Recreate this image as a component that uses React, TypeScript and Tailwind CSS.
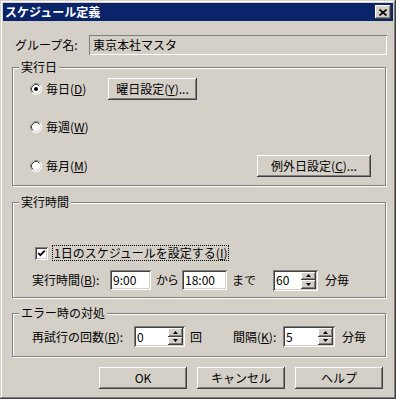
import type { ReactNode } from 'react';

const raised =
  'bg-[#d4d0c8] shadow-[inset_-1px_-1px_0_#404040,inset_1px_1px_0_#ffffff,inset_-2px_-2px_0_#808080,inset_2px_2px_0_#d4d0c8]';
const sunken =
  'shadow-[inset_1px_1px_0_#808080,inset_-1px_-1px_0_#ffffff,inset_2px_2px_0_#404040,inset_-2px_-2px_0_#d4d0c8]';

function Button({ children, className = '' }: { children: ReactNode; className?: string }) {
  return (
    <div className={`flex h-[22px] items-center justify-center ${raised} ${className}`}>
      <span className="leading-[14px]">{children}</span>
    </div>
  );
}

function Group({
  label,
  className = '',
  bodyClassName = '',
  children,
}: {
  label: string;
  className?: string;
  bodyClassName?: string;
  children: ReactNode;
}) {
  return (
    <fieldset
      className={`mr-[1px] border border-[#808080] shadow-[inset_1px_1px_0_#ffffff,1px_1px_0_#ffffff] ${className}`}
    >
      <legend className="ml-[6px] bg-[#d4d0c8] px-[2px] leading-[14px]">{label}</legend>
      <div className={bodyClassName}>{children}</div>
    </fieldset>
  );
}

function Radio({ checked, children }: { checked?: boolean; children: ReactNode }) {
  return (
    <div className="flex items-center gap-[4px]">
      <svg width="12" height="12" viewBox="0 0 12 12" className="shrink-0">
        <circle cx="6" cy="6" r="5.5" fill="#ffffff" stroke="#ffffff" />
        <path d="M2.11 9.89 A5.5 5.5 0 0 1 9.89 2.11" stroke="#808080" fill="none" />
        <circle cx="6" cy="6" r="4.5" fill="none" stroke="#d4d0c8" />
        <path d="M2.82 9.18 A4.5 4.5 0 0 1 9.18 2.82" stroke="#404040" fill="none" />
        <circle cx="6" cy="6" r="3.5" fill="#ffffff" />
        {checked && <circle cx="6" cy="6" r="2" fill="#000000" />}
      </svg>
      <span className="leading-[14px]">{children}</span>
    </div>
  );
}

function Checkbox() {
  return (
    <div className={`flex h-[13px] w-[13px] shrink-0 items-center justify-center bg-white ${sunken}`}>
      <svg width="9" height="9" viewBox="0 0 9 9">
        <polyline points="1.2,4 3.3,6.2 7.8,1.6" fill="none" stroke="#000000" strokeWidth="1.8" />
      </svg>
    </div>
  );
}

function Field({ value, className = '' }: { value: string; className?: string }) {
  return (
    <div className={`flex h-[20px] items-center bg-white pl-[3px] ${sunken} ${className}`}>
      <span className="leading-[14px]">{value}</span>
    </div>
  );
}

function Arrow({ up }: { up?: boolean }) {
  return (
    <div className={`flex flex-1 items-center justify-center ${raised}`}>
      <svg width="5" height="3" viewBox="0 0 5 3">
        <polygon points={up ? '0,3 5,3 2.5,0' : '0,0 5,0 2.5,3'} fill="#000000" />
      </svg>
    </div>
  );
}

function Spin({ value, editW }: { value: string; editW: string }) {
  return (
    <div className={`flex h-[21px] bg-white p-[2px] ${sunken}`}>
      <div className={`flex items-center pl-[1px] ${editW}`}>
        <span className="leading-[14px]">{value}</span>
      </div>
      <div className="flex w-[15px] flex-col">
        <Arrow up />
        <Arrow />
      </div>
    </div>
  );
}

export default function App() {
  return (
    <div
      className="flex h-[399px] w-[396px] flex-col bg-[#d4d0c8] text-[12px] text-black shadow-[inset_-1px_-1px_0_#404040,inset_1px_1px_0_#d4d0c8,inset_-2px_-2px_0_#808080,inset_2px_2px_0_#ffffff]"
      style={{ fontFamily: '"Noto Sans CJK JP", "Noto Sans", sans-serif' }}
    >
      <div className="mx-[3px] mt-[3px] flex h-[18px] items-center justify-between bg-[#0a246a] pl-[2px] pr-[2px]">
        <span className="text-[12px] font-bold leading-[14px] text-white">スケジュール定義</span>
        <div className={`flex h-[14px] w-[16px] items-center justify-center ${raised}`}>
          <svg width="8" height="7" viewBox="0 0 8 7">
            <path d="M0.5 0.5 L7.5 6.5 M7.5 0.5 L0.5 6.5" stroke="#000000" strokeWidth="1.6" />
          </svg>
        </div>
      </div>

      <div className="flex flex-col pl-[12px] pr-[9px]">
        <div className="mt-[14px] flex h-[20px] items-center">
          <span className="w-[77px] pl-[3px] leading-[14px]">グループ名:</span>
          <div className="flex h-[20px] flex-1 items-center pl-[4px] shadow-[inset_1px_1px_0_#808080,inset_-1px_-1px_0_#ffffff]">
            <span className="leading-[14px]">東京本社マスタ</span>
          </div>
        </div>

        <Group label="実行日" className="mt-[5px]" bodyClassName="pb-[8px] pl-[17px] pr-[14px] pt-[4px]">
          <div className="flex h-[22px] items-center">
            <div className="w-[78px]">
              <Radio checked>
                毎日(<u>D</u>)
              </Radio>
            </div>
            <Button className="w-[89px]">
              曜日設定(<u>Y</u>)...
            </Button>
          </div>
          <div className="mt-[16px] flex h-[22px] items-center">
            <Radio>
              毎週(<u>W</u>)
            </Radio>
          </div>
          <div className="mt-[17px] flex h-[22px] items-center">
            <Radio>
              毎月(<u>M</u>)
            </Radio>
            <Button className="ml-auto w-[114px]">
              例外日設定(<u>C</u>)...
            </Button>
          </div>
        </Group>

        <Group label="実行時間" className="mt-[9px]" bodyClassName="pb-[7px] pl-[19px] pt-[36px]">
          <div className="ml-[3px] flex h-[16px] items-center gap-[4px]">
            <Checkbox />
            <span className="border border-dotted border-black px-[1px] leading-[14px]">
              1日のスケジュールを設定する(<u>I</u>)
            </span>
          </div>
          <div className="mt-[9px] flex h-[20px] items-center">
            <span className="w-[78px] leading-[14px]">
              実行時間(<u>B</u>):
            </span>
            <Field value="9:00" className="w-[41px]" />
            <span className="w-[31px] pl-[5px] leading-[14px] tracking-[-1px]">から</span>
            <Field value="18:00" className="w-[45px]" />
            <span className="w-[46px] pl-[5px] leading-[14px]">まで</span>
            <Spin value="60" editW="w-[26px]" />
            <span className="ml-[7px] leading-[14px]">分毎</span>
          </div>
        </Group>

        <Group label="エラー時の対処" className="mt-[8px]" bodyClassName="pb-[9px] pl-[19px] pt-[6px]">
          <div className="flex h-[21px] items-center">
            <span className="w-[102px] leading-[14px]">
              再試行の回数(<u>R</u>):
            </span>
            <Spin value="0" editW="w-[32px]" />
            <span className="w-[48px] pl-[5px] leading-[14px]">回</span>
            <span className="w-[50px] leading-[14px]">
              間隔(<u>K</u>):
            </span>
            <Spin value="5" editW="w-[33px]" />
            <span className="ml-[7px] leading-[14px]">分毎</span>
          </div>
        </Group>

        <div className="mt-[10px] mr-[4px] flex justify-end gap-[10px]">
          <Button className="h-[21px] w-[88px]">OK</Button>
          <Button className="h-[21px] w-[88px]">キャンセル</Button>
          <Button className="h-[21px] w-[88px]">ヘルプ</Button>
        </div>
      </div>
    </div>
  );
}
